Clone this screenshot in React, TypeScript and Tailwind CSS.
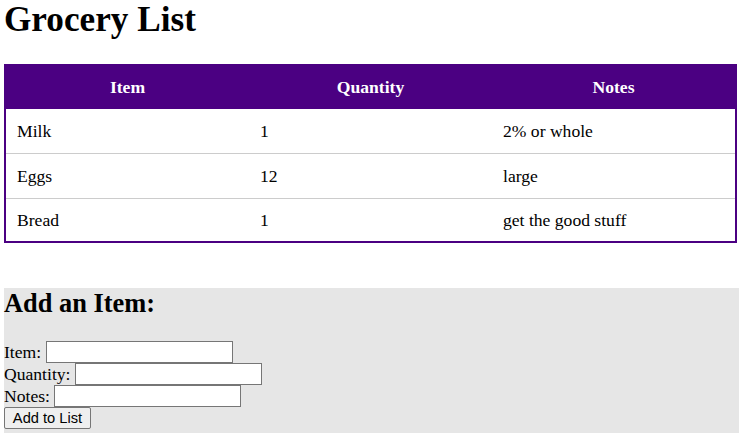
import React from "react";

const ITEMS = [
  { name: "Milk", qty: "1", notes: "2% or whole" },
  { name: "Eggs", qty: "12", notes: "large" },
  { name: "Bread", qty: "1", notes: "get the good stuff" },
];

export default function App() {
  return (
    <div className="pl-[4px] bg-white text-black text-[17.6px] font-['Liberation_Serif',_'Times_New_Roman',_serif] min-h-[433px]">
      <h1 className="text-[35.2px] font-bold leading-[40px] mb-[24px]">Grocery List</h1>

      {/* list table */}
      <div className="w-[733px] border-2 border-[#4b0082]">
        <div className="grid grid-cols-3 h-[43px] bg-[#4b0082] text-white font-bold">
          <div className="flex items-center justify-center">Item</div>
          <div className="flex items-center justify-center">Quantity</div>
          <div className="flex items-center justify-center">Notes</div>
        </div>
        {ITEMS.map((it, i) => (
          <div
            key={it.name}
            className={
              "grid grid-cols-3 " + (i < ITEMS.length - 1 ? "h-[45px] border-b border-[#cccccc]" : "h-[42px]")
            }
          >
            <div className="flex items-center px-[11px]">{it.name}</div>
            <div className="flex items-center px-[11px]">{it.qty}</div>
            <div className="flex items-center px-[11px]">{it.notes}</div>
          </div>
        ))}
      </div>

      {/* add form */}
      <div className="mt-[45px] w-[735px] bg-[#e6e6e6] pb-[10px]">
        <h2 className="text-[26.4px] font-bold leading-[30px] mb-[23px]">Add an Item:</h2>
        <div className="h-[22px] flex items-center">
          Item:&nbsp;
          <input className="w-[187px] h-[22px] border border-[#767676] bg-white" />
        </div>
        <div className="h-[22px] flex items-center">
          Quantity:&nbsp;
          <input className="w-[187px] h-[22px] border border-[#767676] bg-white" />
        </div>
        <div className="h-[22px] flex items-center">
          Notes:&nbsp;
          <input className="w-[187px] h-[22px] border border-[#767676] bg-white" />
        </div>
        <button className="block h-[22px] w-[87px] border border-[#767676] rounded-[2px] bg-[#efefef] text-[14.67px] font-['Liberation_Sans',_Arial,_sans-serif] leading-none">
          Add to List
        </button>
      </div>
    </div>
  );
}
